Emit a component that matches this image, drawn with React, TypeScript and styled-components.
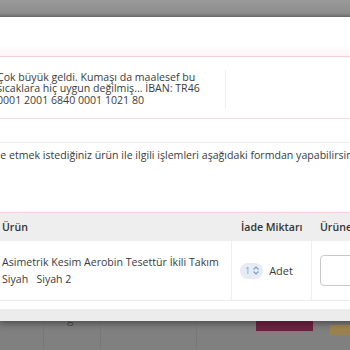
import React from "react";
import styled, { createGlobalStyle } from "styled-components";

const Global = createGlobalStyle`
  html, body { margin: 0; padding: 0; }
  body {
    width: 350px; height: 350px; overflow: hidden;
    background: #808080;
    font-family: "Open Sans", "Noto Sans", sans-serif;
    color: #3b3b3b;
  }
`;

const Page = styled.div`
  width: 350px;
  height: 350px;
  overflow: hidden;
  position: relative;
  display: flex;
  flex-direction: column;
`;

const TopBand = styled.div`
  height: 17px;
  flex: none;
  background: linear-gradient(#9a9a9a, #8c8c8c 80%, #6f6f6f);
`;

const Modal = styled.div`
  flex: none;
  width: 360px;
  background: #fff;
  display: flex;
  flex-direction: column;
  box-shadow: 0 2px 6px rgba(0, 0, 0, 0.35);
  position: relative;
  z-index: 1;
`;

const HeadArea = styled.div`
  height: 39px;
  background: linear-gradient(#fff 70%, #fcf5f8);
  border-bottom: 1.5px solid #f3cfdc;
`;

const NoteRow = styled.div`
  height: 61px;
  display: flex;
  align-items: center;
  border-bottom: 1px solid #f5dbe5;
`;

const NoteText = styled.div`
  width: 228px;
  margin-left: -3px;
  margin-top: 3px;
  font-size: 10.6px;
  line-height: 11.6px;
  border-right: 1px solid #eeeeee;
  padding: 2px 0;
  white-space: nowrap;
`;

const Spacer = styled.div`
  height: 23px;
  border-bottom: 1px solid #ececec;
`;

const Intro = styled.p`
  margin: 0;
  height: 70px;
  padding-top: 4px;
  box-sizing: border-box;
  font-size: 10.6px;
  line-height: 16px;
  white-space: nowrap;
  margin-left: -15px;
  border-bottom: 1.5px solid #f3cfdc;
`;

const Table = styled.div`
  display: grid;
  grid-template-columns: 232px 80px 60px;
`;

const HeadCell = styled.div<{ $pad: number }>`
  background: #eeeeee;
  height: 28px;
  display: flex;
  align-items: center;
  font-size: 10.6px;
  font-weight: 600;
  color: #333;
  padding-left: ${(p) => p.$pad}px;
  white-space: nowrap;
`;

const BodyCell = styled.div<{ $pad: number; $border?: boolean }>`
  height: 59px;
  display: flex;
  align-items: center;
  padding-left: ${(p) => p.$pad}px;
  border-bottom: 1px solid #ededed;
  border-right: ${(p) => (p.$border ? "1px solid #eeeeee" : "none")};
  font-size: 10.6px;
  white-space: nowrap;
`;

const ProductName = styled.div`
  line-height: 17px;
`;

const Qty = styled.div`
  display: flex;
  align-items: center;
  gap: 6px;
  font-size: 11px;
`;

const Pill = styled.span`
  display: inline-flex;
  align-items: center;
  gap: 2px;
  height: 16px;
  padding: 0 3px 0 5px;
  border-radius: 8px;
  background: #e6ebf4;
  color: #7d9bd1;
  font-size: 9px;
`;

const Input = styled.div`
  width: 60px;
  height: 31px;
  border: 1px solid #c9c9c9;
  border-radius: 4px;
  box-sizing: border-box;
  margin-left: 8px;
`;

const Gap = styled.div`
  height: 8px;
`;

const Track = styled.div`
  height: 12px;
  background: #ececec;
`;

const Behind = styled.div`
  flex: 1;
  background: linear-gradient(#767676, #808080 40%);
  position: relative;
`;

const Maroon = styled.div`
  position: absolute;
  left: 256px;
  top: 0;
  width: 57px;
  height: 10px;
  background: #6a2240;
`;

const Gold = styled.div`
  position: absolute;
  left: 330px;
  top: 4px;
  width: 30px;
  height: 10px;
  background: #9b8150;
`;

const VLine = styled.div<{ $x: number }>`
  position: absolute;
  left: ${(p) => p.$x}px;
  top: 0;
  width: 1px;
  height: 28px;
  background: #777;
`;

const HiddenLabel = styled.span`
  position: absolute;
  left: 67px;
  top: -11px;
  font-size: 12px;
  color: #4a4a4a;
`;

export default function App() {
  return (
    <Page>
      <Global />
      <TopBand />
      <Modal>
        <HeadArea />
        <NoteRow>
          <NoteText>
            Çok büyük geldi. Kumaşı da maalesef bu
            <br />
            sıcaklara hiç uygun değilmiş... İBAN: TR46
            <br />
            0001 2001 6840 0001 1021 80
          </NoteText>
        </NoteRow>
        <Spacer />
        <Intro>İade etmek istediğiniz ürün ile ilgili işlemleri aşağıdaki formdan yapabilirsiniz.</Intro>
        <Table>
          <HeadCell $pad={2}>Ürün</HeadCell>
          <HeadCell $pad={9}>İade Miktarı</HeadCell>
          <HeadCell $pad={8}>Ürüne</HeadCell>
          <BodyCell $pad={2} $border>
            <ProductName>
              Asimetrik Kesim Aerobin Tesettür İkili Takım
              <br />
              Siyah&nbsp;&nbsp; Siyah 2
            </ProductName>
          </BodyCell>
          <BodyCell $pad={8} $border>
            <Qty>
              <Pill>
                1
                <svg width="8" height="9" viewBox="0 0 8 9" fill="none" stroke="#7d9bd1" strokeWidth="1.2">
                  <path d="M1.5 3.5 L4 1 L6.5 3.5" />
                  <path d="M1.5 5.5 L4 8 L6.5 5.5" />
                </svg>
              </Pill>
              Adet
            </Qty>
          </BodyCell>
          <BodyCell $pad={0}>
            <Input />
          </BodyCell>
        </Table>
        <Gap />
        <Track />
      </Modal>
      <Behind>
        <HiddenLabel>g</HiddenLabel>
        <VLine $x={43} />
        <VLine $x={100} />
        <VLine $x={196} />
        <Maroon />
        <Gold />
      </Behind>
    </Page>
  );
}
